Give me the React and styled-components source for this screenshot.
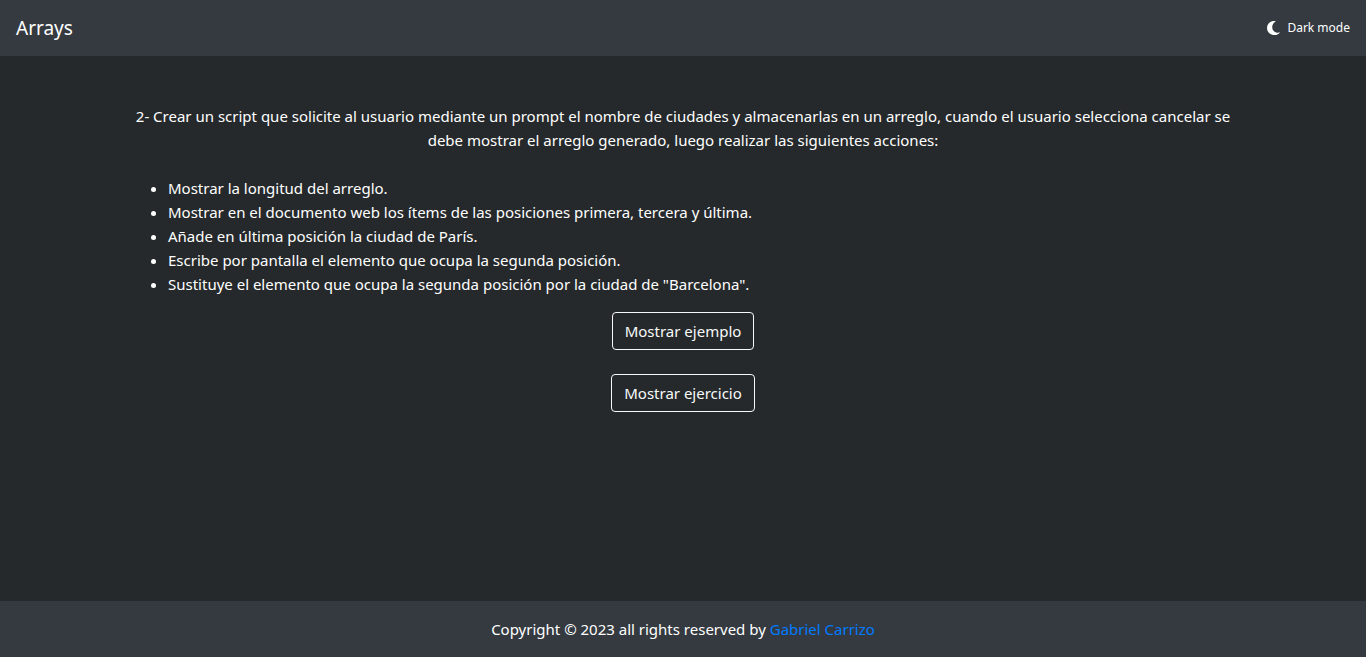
import React from "react";
import styled, { createGlobalStyle } from "styled-components";

const GlobalStyle = createGlobalStyle`
  *, *::before, *::after { box-sizing: border-box; }
  body {
    margin: 0;
    background: #25292b;
    color: #fff;
    font: 400 15px/24px "Noto Sans", "Open Sans", sans-serif;
  }
`;

const Page = styled.div`
  min-height: 100vh;
  display: flex;
  flex-direction: column;
`;

const Navbar = styled.header`
  display: flex;
  align-items: center;
  justify-content: space-between;
  padding: 8px 16px;
  min-height: 56px;
  background: #343a40;
`;

const Brand = styled.a`
  color: #fff;
  font-size: 19px;
  line-height: 32px;
  text-decoration: none;
`;

const ModeButton = styled.button`
  display: flex;
  align-items: center;
  gap: 6px;
  padding: 0;
  border: 0;
  background: none;
  color: #fff;
  font: inherit;
  font-size: 12px;
  cursor: pointer;
`;

const Content = styled.main`
  flex: 1;
  display: flex;
  flex-direction: column;
  align-items: center;
  width: 100%;
  max-width: 1140px;
  margin: 0 auto;
  padding: 48px 15px;
`;

const Statement = styled.p`
  margin: 0 0 24px;
  text-align: center;
`;

const Tasks = styled.ul`
  align-self: stretch;
  margin: 0 0 16px;
  padding-left: 40px;
`;

const OutlineButton = styled.button`
  margin-bottom: 24px;
  padding: 6px 12px;
  border: 1px solid #f8f9fa;
  border-radius: 4px;
  background: transparent;
  color: #f8f9fa;
  font: inherit;
  cursor: pointer;
`;

const Footer = styled.footer`
  padding: 16px;
  background: #343a40;
  text-align: center;
`;

const AuthorLink = styled.a`
  color: #007bff;
  text-decoration: none;
`;

const MoonIcon = () => (
  <svg width="15" height="16" viewBox="0 0 15 16" fill="#fff" aria-hidden="true">
    <path d="M9.900 1.100C4.900 .3 1 3.500 1 8.100s3.600 7 7.600 7c2.400 0 4.300-.9 5.400-2.800-1 .4-2 .6-3.100.4C5.900 12 3.900 5.200 9.900 1.100Z" />
  </svg>
);

const tasks = [
  "Mostrar la longitud del arreglo.",
  "Mostrar en el documento web los ítems de las posiciones primera, tercera y última.",
  "Añade en última posición la ciudad de París.",
  "Escribe por pantalla el elemento que ocupa la segunda posición.",
  'Sustituye el elemento que ocupa la segunda posición por la ciudad de "Barcelona".',
];

export default function App() {
  return (
    <Page>
      <GlobalStyle />
      <Navbar>
        <Brand href="#">Arrays</Brand>
        <ModeButton type="button">
          <MoonIcon />
          Dark mode
        </ModeButton>
      </Navbar>
      <Content>
        <Statement>
          2- Crear un script que solicite al usuario mediante un prompt el nombre de ciudades y
          almacenarlas en un arreglo, cuando el usuario selecciona cancelar se debe mostrar el
          arreglo generado, luego realizar las siguientes acciones:
        </Statement>
        <Tasks>
          {tasks.map((task) => (
            <li key={task}>{task}</li>
          ))}
        </Tasks>
        <OutlineButton type="button">Mostrar ejemplo</OutlineButton>
        <OutlineButton type="button">Mostrar ejercicio</OutlineButton>
      </Content>
      <Footer>
        Copyright © 2023 all rights reserved by <AuthorLink href="#">Gabriel Carrizo</AuthorLink>
      </Footer>
    </Page>
  );
}
